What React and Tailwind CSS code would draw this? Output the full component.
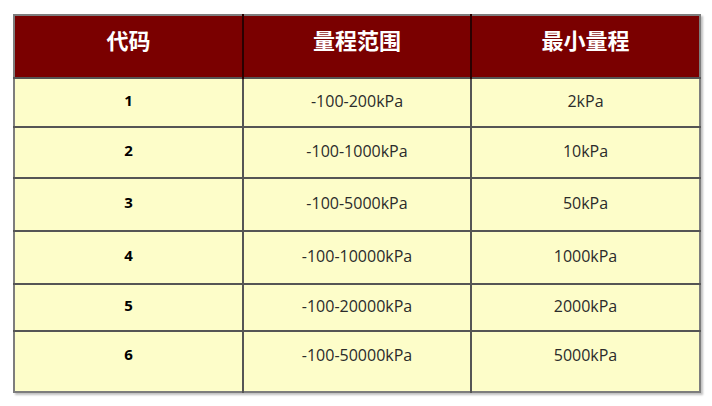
const ROWS = [
  { code: '1', range: '-100-200kPa', min: '2kPa', h: 'h-[49px]', pb: 'pb-[4px]' },
  { code: '2', range: '-100-1000kPa', min: '10kPa', h: 'h-[51px]', pb: 'pb-[4px]' },
  { code: '3', range: '-100-5000kPa', min: '50kPa', h: 'h-[53px]', pb: 'pb-[4px]' },
  { code: '4', range: '-100-10000kPa', min: '1000kPa', h: 'h-[53px]', pb: 'pb-[4px]' },
  { code: '5', range: '-100-20000kPa', min: '2000kPa', h: 'h-[47px]', pb: 'pb-[4px]' },
  { code: '6', range: '-100-50000kPa', min: '5000kPa', h: 'h-[61px]', pb: 'pb-[14px]' },
]

export default function App() {
  return (
    <div
      className="w-[712px] h-[406px] bg-white pl-[13px] pt-[14px]"
      style={{ fontFamily: '"Open Sans", "Noto Sans CJK SC", sans-serif' }}
    >
      <table className="w-[686px] border-collapse table-fixed border-2 border-[#7d7d7d] shadow-[2px_2px_2px_rgba(0,0,0,0.25)]">
        <colgroup>
          <col className="w-[229px]" />
          <col className="w-[228px]" />
          <col className="w-[229px]" />
        </colgroup>
        <thead>
          <tr className="h-[63px] bg-[#7a0000] text-white text-[22px] font-bold">
            <th className="border-r-2 border-[#2a0000] pb-[12px]">代码</th>
            <th className="border-r-2 border-[#2a0000] pb-[12px]">量程范围</th>
            <th className="pb-[12px]">最小量程</th>
          </tr>
        </thead>
        <tbody className="bg-[#fdfdc9] text-[16px] text-[#2b2b2b]">
          {ROWS.map((r) => (
            <tr key={r.code} className={`${r.h} border-t-2 border-[#555]`}>
              <td className={`border-r-2 border-[#555] text-center font-bold text-[15px] text-black ${r.pb}`}>
                {r.code}
              </td>
              <td className={`border-r-2 border-[#555] text-center ${r.pb}`}>{r.range}</td>
              <td className={`text-center ${r.pb}`}>{r.min}</td>
            </tr>
          ))}
        </tbody>
      </table>
    </div>
  )
}
